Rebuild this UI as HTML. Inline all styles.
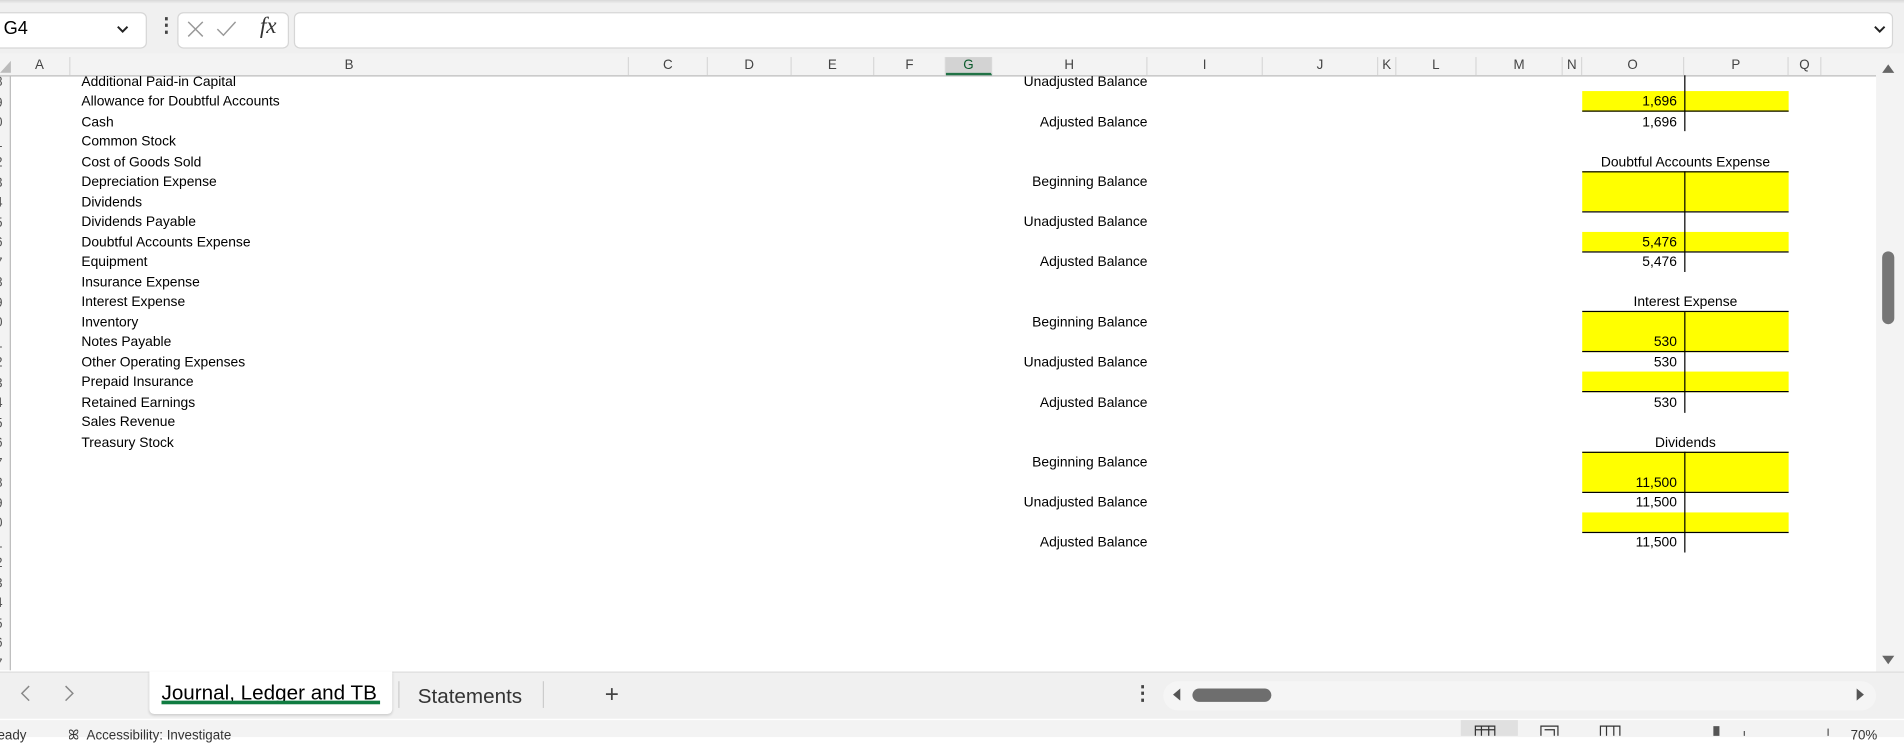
<!DOCTYPE html>
<html><head><meta charset="utf-8"><style>
html,body{margin:0;padding:0;width:1904px;height:736px;overflow:hidden;background:#fff}
#w{position:absolute;left:0;top:0;width:1568px;height:606px;transform:scale(1.21429);transform-origin:0 0;font-family:"Liberation Sans",sans-serif;color:#000}
.a{position:absolute}
.t{position:absolute;font-size:11.4px;line-height:16.5px;white-space:nowrap}
.ch{position:absolute;top:47px;height:15px;font-size:11px;line-height:15px;text-align:center;color:#444;border-right:1px solid #d8d8d8;font-family:"Liberation Sans",sans-serif}
.r{margin-top:1px}
</style></head><body><div id="w">
<div class="a" style="left:0;top:0;width:1568px;height:44px;background:#f0f0f0"></div>
<div class="a" style="left:0;top:0;width:1568px;height:3px;background:linear-gradient(#d8d8d8,#f0f0f0)"></div>
<div class="a" style="left:-6px;top:10px;width:125px;height:28px;background:#fff;border:1px solid #d6d6d6;border-radius:5px"></div>
<div class="t" style="left:3px;top:15px;font-size:15px;line-height:18px">G4</div>
<svg class="a" style="left:95px;top:20px" width="12" height="8"><path d="M2 2l4 4 4-4" stroke="#222" stroke-width="1.6" fill="none"/></svg>
<div class="t" style="left:129px;top:12px;font-size:16px;line-height:20px;color:#444;font-weight:bold">⋮</div>
<div class="a" style="left:146px;top:10px;width:90px;height:28px;background:#fff;border:1px solid #d6d6d6;border-radius:5px"></div>
<svg class="a" style="left:153px;top:16px" width="60" height="16"><path d="M2 2l12 12M14 2L2 14" stroke="#999" stroke-width="1.2"/><path d="M26 8l5 5 10-11" stroke="#999" stroke-width="1.2" fill="none"/></svg>
<div class="t" style="left:214px;top:11px;font-size:19px;line-height:22px;font-style:italic;font-family:'Liberation Serif',serif;color:#333">fx</div>
<div class="a" style="left:242px;top:10px;width:1315px;height:28px;background:#fff;border:1px solid #d6d6d6;border-radius:5px"></div>
<svg class="a" style="left:1542px;top:20px" width="12" height="8"><path d="M2 2l4 4 4-4" stroke="#222" stroke-width="1.6" fill="none"/></svg>
<div class="a" style="left:0;top:44px;width:1545px;height:18px;background:#f3f3f3;border-bottom:1px solid #bbb"></div>
<svg class="a" style="left:0;top:50px" width="9" height="10"><path d="M9 0V10H0z" fill="#bbb"/></svg>
<div class="ch" style="left:8px;width:49px">A</div>
<div class="ch" style="left:58px;width:459px">B</div>
<div class="ch" style="left:518px;width:64px">C</div>
<div class="ch" style="left:583px;width:68px">D</div>
<div class="ch" style="left:652px;width:67px">E</div>
<div class="ch" style="left:720px;width:58px">F</div>
<div class="ch" style="left:779px;width:37px;background:#d3d3d3;border-bottom:2px solid #217346;height:13px;color:#0b5a2c">G</div>
<div class="ch" style="left:817px;width:127px">H</div>
<div class="ch" style="left:945px;width:94px">I</div>
<div class="ch" style="left:1040px;width:94px">J</div>
<div class="ch" style="left:1135px;width:14px">K</div>
<div class="ch" style="left:1150px;width:65px">L</div>
<div class="ch" style="left:1216px;width:70px">M</div>
<div class="ch" style="left:1287px;width:15px">N</div>
<div class="ch" style="left:1303px;width:83px">O</div>
<div class="ch" style="left:1387px;width:85px">P</div>
<div class="ch" style="left:1473px;width:26px">Q</div>
<div class="a" style="left:0;top:63px;width:8px;height:489px;background:#f3f3f3;border-right:1px solid #bbb;overflow:hidden;font-size:11px;color:#555">
<div style="position:absolute;left:-4px;top:-3px;line-height:16.5px">8<br>9<br>0<br>1<br>2<br>3<br>4<br>5<br>6<br>7<br>8<br>9<br>0<br>1<br>2<br>3<br>4<br>5<br>6<br>7<br>8<br>9<br>0<br>1<br>2<br>3<br>4<br>5<br>6<br>7</div></div>
<div class="a" style="left:1545px;top:44px;width:23px;height:510px;background:#f3f3f3"></div>
<svg class="a" style="left:1549px;top:51px" width="12" height="10"><path d="M1 9L6 2l5 7z" fill="#666"/></svg>
<svg class="a" style="left:1549px;top:539px" width="12" height="10"><path d="M1 1l5 7 5-7z" fill="#666"/></svg>
<div class="a" style="left:1550px;top:207px;width:10px;height:60px;background:#767676;border-radius:5px"></div>
<div class="t" style="left:67px;top:59.75px;line-height:16.5px">Additional Paid-in Capital<br>Allowance for Doubtful Accounts<br>Cash<br>Common Stock<br>Cost of Goods Sold<br>Depreciation Expense<br>Dividends<br>Dividends Payable<br>Doubtful Accounts Expense<br>Equipment<br>Insurance Expense<br>Interest Expense<br>Inventory<br>Notes Payable<br>Other Operating Expenses<br>Prepaid Insurance<br>Retained Earnings<br>Sales Revenue<br>Treasury Stock</div>
<div class="t" style="left:817px;width:128px;text-align:right;top:59.75px">Unadjusted Balance</div>
<div class="t" style="left:817px;width:128px;text-align:right;top:92.75px">Adjusted Balance</div>
<div class="t" style="left:817px;width:128px;text-align:right;top:142.25px">Beginning Balance</div>
<div class="t" style="left:817px;width:128px;text-align:right;top:175.25px">Unadjusted Balance</div>
<div class="t" style="left:817px;width:128px;text-align:right;top:208.25px">Adjusted Balance</div>
<div class="t" style="left:817px;width:128px;text-align:right;top:257.75px">Beginning Balance</div>
<div class="t" style="left:817px;width:128px;text-align:right;top:290.75px">Unadjusted Balance</div>
<div class="t" style="left:817px;width:128px;text-align:right;top:323.75px">Adjusted Balance</div>
<div class="t" style="left:817px;width:128px;text-align:right;top:373.25px">Beginning Balance</div>
<div class="t" style="left:817px;width:128px;text-align:right;top:406.25px">Unadjusted Balance</div>
<div class="t" style="left:817px;width:128px;text-align:right;top:439.25px">Adjusted Balance</div>
<div class="a" style="left:1303px;top:75px;width:170px;height:16.5px;background:#ffff00"></div>
<div class="a" style="left:1303px;top:141.25px;width:170px;height:33px;background:#ffff00"></div>
<div class="a" style="left:1303px;top:190.75px;width:170px;height:16.5px;background:#ffff00"></div>
<div class="a" style="left:1303px;top:256.75px;width:170px;height:33px;background:#ffff00"></div>
<div class="a" style="left:1303px;top:306.25px;width:170px;height:16.5px;background:#ffff00"></div>
<div class="a" style="left:1303px;top:372.25px;width:170px;height:33px;background:#ffff00"></div>
<div class="a" style="left:1303px;top:421.75px;width:170px;height:16.5px;background:#ffff00"></div>
<div class="a" style="left:1303px;top:90.5px;width:170px;height:1px;background:#000"></div>
<div class="a" style="left:1303px;top:140.75px;width:170px;height:1px;background:#000"></div>
<div class="a" style="left:1303px;top:173.75px;width:170px;height:1px;background:#000"></div>
<div class="a" style="left:1303px;top:206.75px;width:170px;height:1px;background:#000"></div>
<div class="a" style="left:1303px;top:256.25px;width:170px;height:1px;background:#000"></div>
<div class="a" style="left:1303px;top:289.25px;width:170px;height:1px;background:#000"></div>
<div class="a" style="left:1303px;top:322.25px;width:170px;height:1px;background:#000"></div>
<div class="a" style="left:1303px;top:371.75px;width:170px;height:1px;background:#000"></div>
<div class="a" style="left:1303px;top:404.75px;width:170px;height:1px;background:#000"></div>
<div class="a" style="left:1303px;top:437.75px;width:170px;height:1px;background:#000"></div>
<div class="a" style="left:1386.5px;top:62px;width:1px;height:46px;background:#000"></div>
<div class="a" style="left:1386.5px;top:141px;width:1px;height:83px;background:#000"></div>
<div class="a" style="left:1386.5px;top:256.5px;width:1px;height:83px;background:#000"></div>
<div class="a" style="left:1386.5px;top:372px;width:1px;height:83px;background:#000"></div>
<div class="t" style="left:1303px;width:170px;text-align:center;top:125.75px">Doubtful Accounts Expense</div>
<div class="t" style="left:1303px;width:170px;text-align:center;top:241.25px">Interest Expense</div>
<div class="t" style="left:1303px;width:170px;text-align:center;top:356.75px">Dividends</div>
<div class="t" style="left:1303px;width:78px;text-align:right;top:76.25px">1,696</div>
<div class="t" style="left:1303px;width:78px;text-align:right;top:92.75px">1,696</div>
<div class="t" style="left:1303px;width:78px;text-align:right;top:191.75px">5,476</div>
<div class="t" style="left:1303px;width:78px;text-align:right;top:208.25px">5,476</div>
<div class="t" style="left:1303px;width:78px;text-align:right;top:274.25px">530</div>
<div class="t" style="left:1303px;width:78px;text-align:right;top:290.75px">530</div>
<div class="t" style="left:1303px;width:78px;text-align:right;top:323.75px">530</div>
<div class="t" style="left:1303px;width:78px;text-align:right;top:389.75px">11,500</div>
<div class="t" style="left:1303px;width:78px;text-align:right;top:406.25px">11,500</div>
<div class="t" style="left:1303px;width:78px;text-align:right;top:439.25px">11,500</div>
<div class="a" style="left:0;top:553px;width:1568px;height:38px;background:#f0f0f0;border-top:1px solid #ddd"></div>
<svg class="a" style="left:14px;top:563px" width="50" height="16"><path d="M10 2L4 8l6 6M40 2l6 6-6 6" stroke="#888" stroke-width="1.2" fill="none"/></svg>
<div class="a" style="left:123px;top:553px;width:200px;height:35px;background:#fff;border-radius:0 0 4px 4px;box-shadow:0 1px 2px rgba(0,0,0,.15)"></div>
<div class="t" style="left:133px;top:561px;font-size:17px;line-height:20px">Journal, Ledger and TB</div>
<div class="a" style="left:133px;top:577px;width:180px;height:3px;background:#107c41"></div>
<div class="t" style="left:344px;top:564px;font-size:17px;line-height:20px;color:#333">Statements</div>
<div class="a" style="left:447px;top:561px;width:1px;height:22px;background:#ccc"></div>
<div class="a" style="left:328px;top:561px;width:1px;height:22px;background:#ccc"></div>
<div class="t" style="left:498px;top:561px;font-size:20px;line-height:22px;color:#444">+</div>
<div class="t" style="left:933px;top:561px;font-size:16px;line-height:22px;color:#444;font-weight:bold">⋮</div>
<div class="a" style="left:958px;top:561px;width:587px;height:24px;background:#f5f5f5;border-radius:12px"></div>
<svg class="a" style="left:964px;top:566px" width="10" height="12"><path d="M8 1L2 6l6 5z" fill="#555"/></svg>
<div class="a" style="left:982px;top:567px;width:65px;height:11px;background:#6e6e6e;border-radius:6px"></div>
<svg class="a" style="left:1527px;top:566px" width="10" height="12"><path d="M2 1l6 5-6 5z" fill="#555"/></svg>
<div class="a" style="left:0;top:592px;width:1568px;height:14px;background:#f3f3f3;border-top:1px solid #fff"></div>
<div class="t" style="left:-10px;top:598px;font-size:11px;color:#333">Ready</div>
<div class="t" style="left:56px;top:598px;font-size:11px;color:#333">ꕤ&nbsp; Accessibility: Investigate</div>
<div class="a" style="left:1203px;top:593px;width:47px;height:13px;background:#e0e0e0"></div>
<svg class="a" style="left:1214px;top:597px" width="130" height="9"><path d="M1 9V1h16v8M1 4h16M6 1v8M12 1v8" stroke="#333" fill="none"/><path d="M55 9V1h14v8M58 4h8v5" stroke="#333" fill="none"/><path d="M104 9V1h16v8M109 1v8M115 1v8" stroke="#333" fill="none"/></svg>
<div class="a" style="left:1411px;top:598px;width:5px;height:8px;background:#555"></div>
<div class="a" style="left:1436px;top:602px;width:1px;height:4px;background:#555"></div>
<div class="a" style="left:1505px;top:600px;width:1px;height:6px;background:#555"></div>
<div class="t" style="left:1524px;top:598px;font-size:11px;color:#333">70%</div>
</div></body></html>
